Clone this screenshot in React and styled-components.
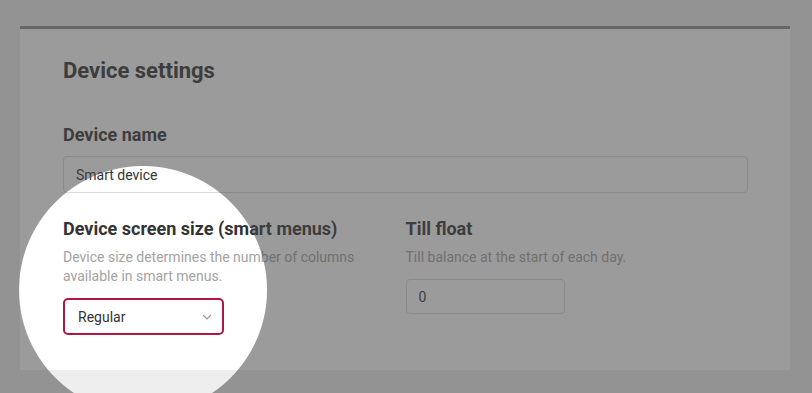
import React from 'react'
import styled, { createGlobalStyle } from 'styled-components'

const GlobalStyle = createGlobalStyle`
  body {
    margin: 0;
    background: #eeeeee;
    font-family: Roboto, "Liberation Sans", Arial, sans-serif;
    color: #333;
    overflow: hidden;
  }
`

let Page = styled.div`
  box-sizing: border-box;
  min-height: 100vh;
  padding: 26px 22px 0 20px;
`

let Card = styled.section`
  background: #fff;
  border-top: 3px solid #8f8f8f;
  padding: 29px 42px 35px 43px;
`

let Title = styled.h2`
  margin: 0;
  font-size: 22px;
  line-height: 26px;
  font-weight: 700;
  color: #333;
`

let Field = styled.div`
  margin-top: ${(props) => props.top || 0}px;
`

let Label = styled.h3`
  margin: 0;
  font-size: 18px;
  line-height: 22px;
  font-weight: 700;
  color: #333;
`

let Hint = styled.p`
  margin: 8px 0 0;
  font-size: 14px;
  line-height: 19px;
  color: #a3a3a3;
`

let TextInput = styled.input`
  display: block;
  box-sizing: border-box;
  width: ${(props) => props.w || '100%'};
  height: ${(props) => props.h || 37}px;
  margin-top: ${(props) => props.top || 10}px;
  padding: 0 12px;
  border: 1px solid #d9d9d9;
  border-radius: 4px;
  background: #fff;
  font-family: inherit;
  font-size: 14px;
  color: #333;
  outline: none;
`

let Row = styled.div`
  display: grid;
  grid-template-columns: 1fr 1fr;
`

let Column = styled.div`
  padding-right: 20px;
`

let SelectBox = styled.div`
  box-sizing: border-box;
  width: 161px;
  height: 37px;
  margin-top: 12px;
  display: flex;
  align-items: center;
  justify-content: space-between;
  padding: 0 10px 0 13px;
  border: 2px solid #b0163f;
  border-radius: 5px;
  background: #fff;
  font-size: 14px;
  color: #333;
`

// 하이라이트 원 빼고 화면 전체 어둡게
let Dimmer = styled.div`
  position: fixed;
  inset: 0;
  pointer-events: none;
  background: radial-gradient(
    circle at 143px 290px,
    rgba(70, 70, 70, 0) 123.5px,
    rgba(70, 70, 70, 0.54) 124.5px
  );
`

function Chevron() {
  return (
    <svg width="10" height="6" viewBox="0 0 10 6">
      <polyline points="1,1 5,5 9,1" fill="none" stroke="#9a9a9a" strokeWidth="1.2" />
    </svg>
  )
}

export default function App() {
  return (
    <Page>
      <GlobalStyle />
      <Card>
        <Title>Device settings</Title>

        <Field top={40}>
          <Label>Device name</Label>
          <TextInput defaultValue="Smart device" />
        </Field>

        <Row>
          <Column>
            <Field top={25}>
              <Label>Device screen size (smart menus)</Label>
              <Hint>Device size determines the number of columns available in smart menus.</Hint>
              <SelectBox>
                <span>Regular</span>
                <Chevron />
              </SelectBox>
            </Field>
          </Column>
          <Column>
            <Field top={25}>
              <Label>Till float</Label>
              <Hint>Till balance at the start of each day.</Hint>
              <TextInput w="159px" h={35} top={12} defaultValue="0" />
            </Field>
          </Column>
        </Row>
      </Card>
      <Dimmer />
    </Page>
  )
}
